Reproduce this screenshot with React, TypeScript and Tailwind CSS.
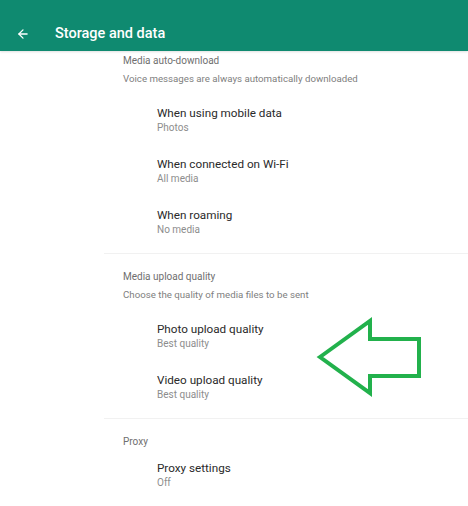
import React from 'react';
import { ArrowLeft } from 'lucide-react';

type Item = { title: string; sub?: string };

function Row({ title, sub }: Item) {
  return (
    <div className="h-[51px] pt-[10px] pl-[53px]">
      <div className="text-[11.7px] leading-[16px] text-[#2a2a2a]">{title}</div>
      {sub && <div className="text-[10px] leading-[14px] text-[#8d8d8d]">{sub}</div>}
    </div>
  );
}

function Section({ title, desc, items, first }: { title: string; desc?: string; items: Item[]; first?: boolean }) {
  return (
    <div className={first ? 'pt-[3px]' : 'pt-[16px] border-t border-[#f1f1f1]'}>
      <div className="pl-[19px] text-[10px] leading-[14px] text-[#6f6f6f]">{title}</div>
      {desc && <div className="pl-[19px] mt-[4px] text-[9.7px] leading-[14px] text-[#808080]">{desc}</div>}
      <div className={desc ? 'mt-[9px]' : 'mt-[1px]'}>
        {items.map((it) => (
          <Row key={it.title} {...it} />
        ))}
      </div>
    </div>
  );
}

export default function App() {
  return (
    <div className="relative w-[468px] h-[506px] bg-white overflow-hidden font-['Roboto',sans-serif]">
      <header className="h-[51px] bg-[#0f8a70] shadow-[0_1px_2px_rgba(0,0,0,0.12)] flex items-start pt-[25px] pl-[16px] gap-[25px]">
        <ArrowLeft className="w-[14px] h-[14px] text-white mt-[2px]" strokeWidth={2.2} />
        <h1 className="text-white text-[14.5px] leading-[18px] font-medium">Storage and data</h1>
      </header>

      <main className="ml-[104px]">
        <Section
          first
          title="Media auto-download"
          desc="Voice messages are always automatically downloaded"
          items={[
            { title: 'When using mobile data', sub: 'Photos' },
            { title: 'When connected on Wi-Fi', sub: 'All media' },
            { title: 'When roaming', sub: 'No media' },
          ]}
        />
        <div className="h-[5px]" />
        <Section
          title="Media upload quality"
          desc="Choose the quality of media files to be sent"
          items={[
            { title: 'Photo upload quality', sub: 'Best quality' },
            { title: 'Video upload quality', sub: 'Best quality' },
          ]}
        />
        <div className="h-[5px]" />
        <Section title="Proxy" items={[{ title: 'Proxy settings', sub: 'Off' }]} />
      </main>

      <svg className="absolute left-0 top-0" width="468" height="506" viewBox="0 0 468 506" fill="none">
        <polygon
          points="320,357 370,321 370,339 419,339 419,376 370,376 370,393"
          stroke="#22b14c"
          strokeWidth="4"
          strokeLinejoin="miter"
        />
      </svg>
    </div>
  );
}
